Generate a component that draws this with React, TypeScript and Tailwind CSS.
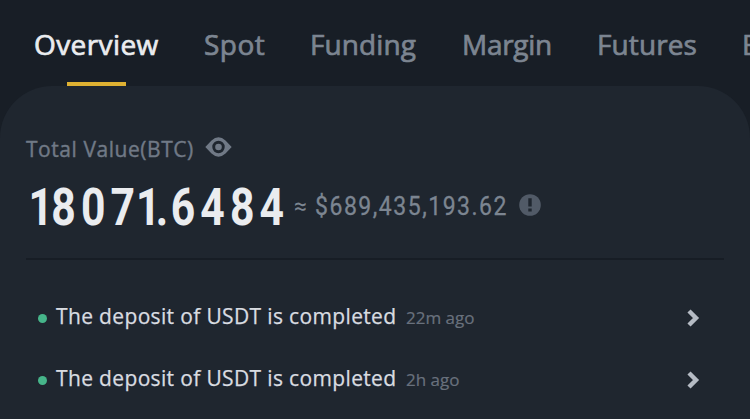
import React, { useState } from "react";

interface Tab {
    name: string;
    className: string;
}

interface Notice {
    id: number;
    message: string;
    time: string;
}

const tabs: Tab[] = [
    { name: "Overview", className: "w-[170px] tracking-[0.4px]" },
    { name: "Spot", className: "w-[106px] tracking-[0.5px]" },
    { name: "Funding", className: "w-[152px] tracking-[0.1px]" },
    { name: "Margin", className: "w-[135px] tracking-[-0.3px]" },
    { name: "Futures", className: "w-[145px] tracking-[0.1px]" },
    { name: "Earn", className: "w-[100px]" },
];

const notices: Notice[] = [
    { id: 1, message: "The deposit of USDT is completed", time: "22m ago" },
    { id: 2, message: "The deposit of USDT is completed", time: "2h ago" },
];

function EyeIcon() {
    return (
        <svg width="27" height="20" viewBox="0 0 27 20" fill="none">
            <path
                fillRule="evenodd"
                d="M0.3 10 L6.5 3.4 Q13.5 -3 20.5 3.4 L26.7 10 L20.5 16.6 Q13.5 23 6.5 16.6 Z M13.5 3.8 A6.2 6.2 0 1 0 13.5 16.2 A6.2 6.2 0 1 0 13.5 3.8 Z"
                fill="#707986"
            />
            <circle cx="13.5" cy="10" r="3.3" fill="#707986" />
        </svg>
    );
}

function InfoIcon() {
    return (
        <svg width="22" height="22" viewBox="0 0 22 22">
            <circle cx="11" cy="11" r="10.8" fill="#515a67" />
            <path d="M9.3 4.2h3.4v8.2H9.3z M9.3 14.4h3.4v3.2H9.3z" fill="#1f262f" />
        </svg>
    );
}

function ChevronIcon() {
    return (
        <svg width="13" height="18" viewBox="0 0 13 18" fill="none">
            <path d="M2 2 L9 9 L2 16" stroke="#b5bbc4" strokeWidth="4.4" />
        </svg>
    );
}

function App() {
    const [active, setActive] = useState("Overview");

    return (
        <div className="h-[419px] w-[750px] overflow-hidden bg-[#181e26] font-['Open_Sans',sans-serif]">
            {/* Tabs */}
            <nav className="flex h-[86px] pl-[34px]">
                {tabs.map((tab) => (
                    <button
                        key={tab.name}
                        onClick={() => setActive(tab.name)}
                        className={`relative flex h-full shrink-0 items-start pt-[24px] text-left text-[28px] leading-[40px] whitespace-nowrap [-webkit-text-stroke:0.7px] ${tab.className} ${
                            active === tab.name ? "text-[#eaecef]" : "text-[#7c8591]"
                        }`}
                    >
                        {tab.name}
                        {active === tab.name && (
                            <span className="absolute bottom-0 left-[33px] h-1 w-[59px] bg-[#dfb132]" />
                        )}
                    </button>
                ))}
            </nav>

            {/* Balance card */}
            <main className="h-[333px] rounded-t-[52px] bg-[#1f262f] px-[26px]">
                <div className="flex h-[94px] items-start pt-[48px]">
                    <span className="w-[179px] text-[21px] leading-[30px] tracking-[0.55px] whitespace-nowrap text-[#707986] [-webkit-text-stroke:0.4px]">
                        Total Value(BTC)
                    </span>
                    <span className="pt-[3px]">
                        <EyeIcon />
                    </span>
                </div>
                <div className="flex h-[78px] items-start font-['Roboto',sans-serif] whitespace-nowrap">
                    {/* the ones and the point are set tighter than the other digits */}
                    <span className="w-[268px] origin-left scale-x-[0.82] pl-[3px] text-[52px] leading-[56px] font-bold tracking-[6.3px] text-[#eaecef]">
                        <span className="tracking-[-2px]">1</span>
                        80
                        <span className="tracking-[1.3px]">7</span>
                        <span className="tracking-[-6px]">1</span>
                        <span className="tracking-[3.2px]">.</span>
                        648
                        <span className="tracking-normal">4</span>
                    </span>
                    <span className="w-[21px] pt-[11px] text-[23px] leading-[32px] text-[#7c8591]">≈</span>
                    <span className="w-[204px] origin-left scale-x-[0.92] pt-[11px] text-[25px] leading-[32px] tracking-[1.65px] text-[#7c8591] [-webkit-text-stroke:0.3px]">
                        $689,435,193.62
                    </span>
                    <span className="pt-[14px]">
                        <InfoIcon />
                    </span>
                </div>
                <hr className="h-[2px] border-0 bg-[#171d25]" />

                {/* Notices */}
                <ul className="pt-[26px]">
                    {notices.map((notice) => (
                        <li key={notice.id} className="flex h-[62px] items-center pr-[24px] pl-[12px]">
                            <span className="mt-[2px] mr-[9px] size-[9px] rounded-full bg-[#46b58a]" />
                            <span className="w-[350px] text-[21px] tracking-[0.35px] whitespace-nowrap text-[#d9dce1] [-webkit-text-stroke:0.25px]">
                                {notice.message}
                            </span>
                            <span className="mt-[2px] text-[17px] whitespace-nowrap text-[#69717d] [-webkit-text-stroke:0.2px]">
                                {notice.time}
                            </span>
                            <span className="mt-[2px] ml-auto">
                                <ChevronIcon />
                            </span>
                        </li>
                    ))}
                </ul>
            </main>
        </div>
    );
}

export default App;
